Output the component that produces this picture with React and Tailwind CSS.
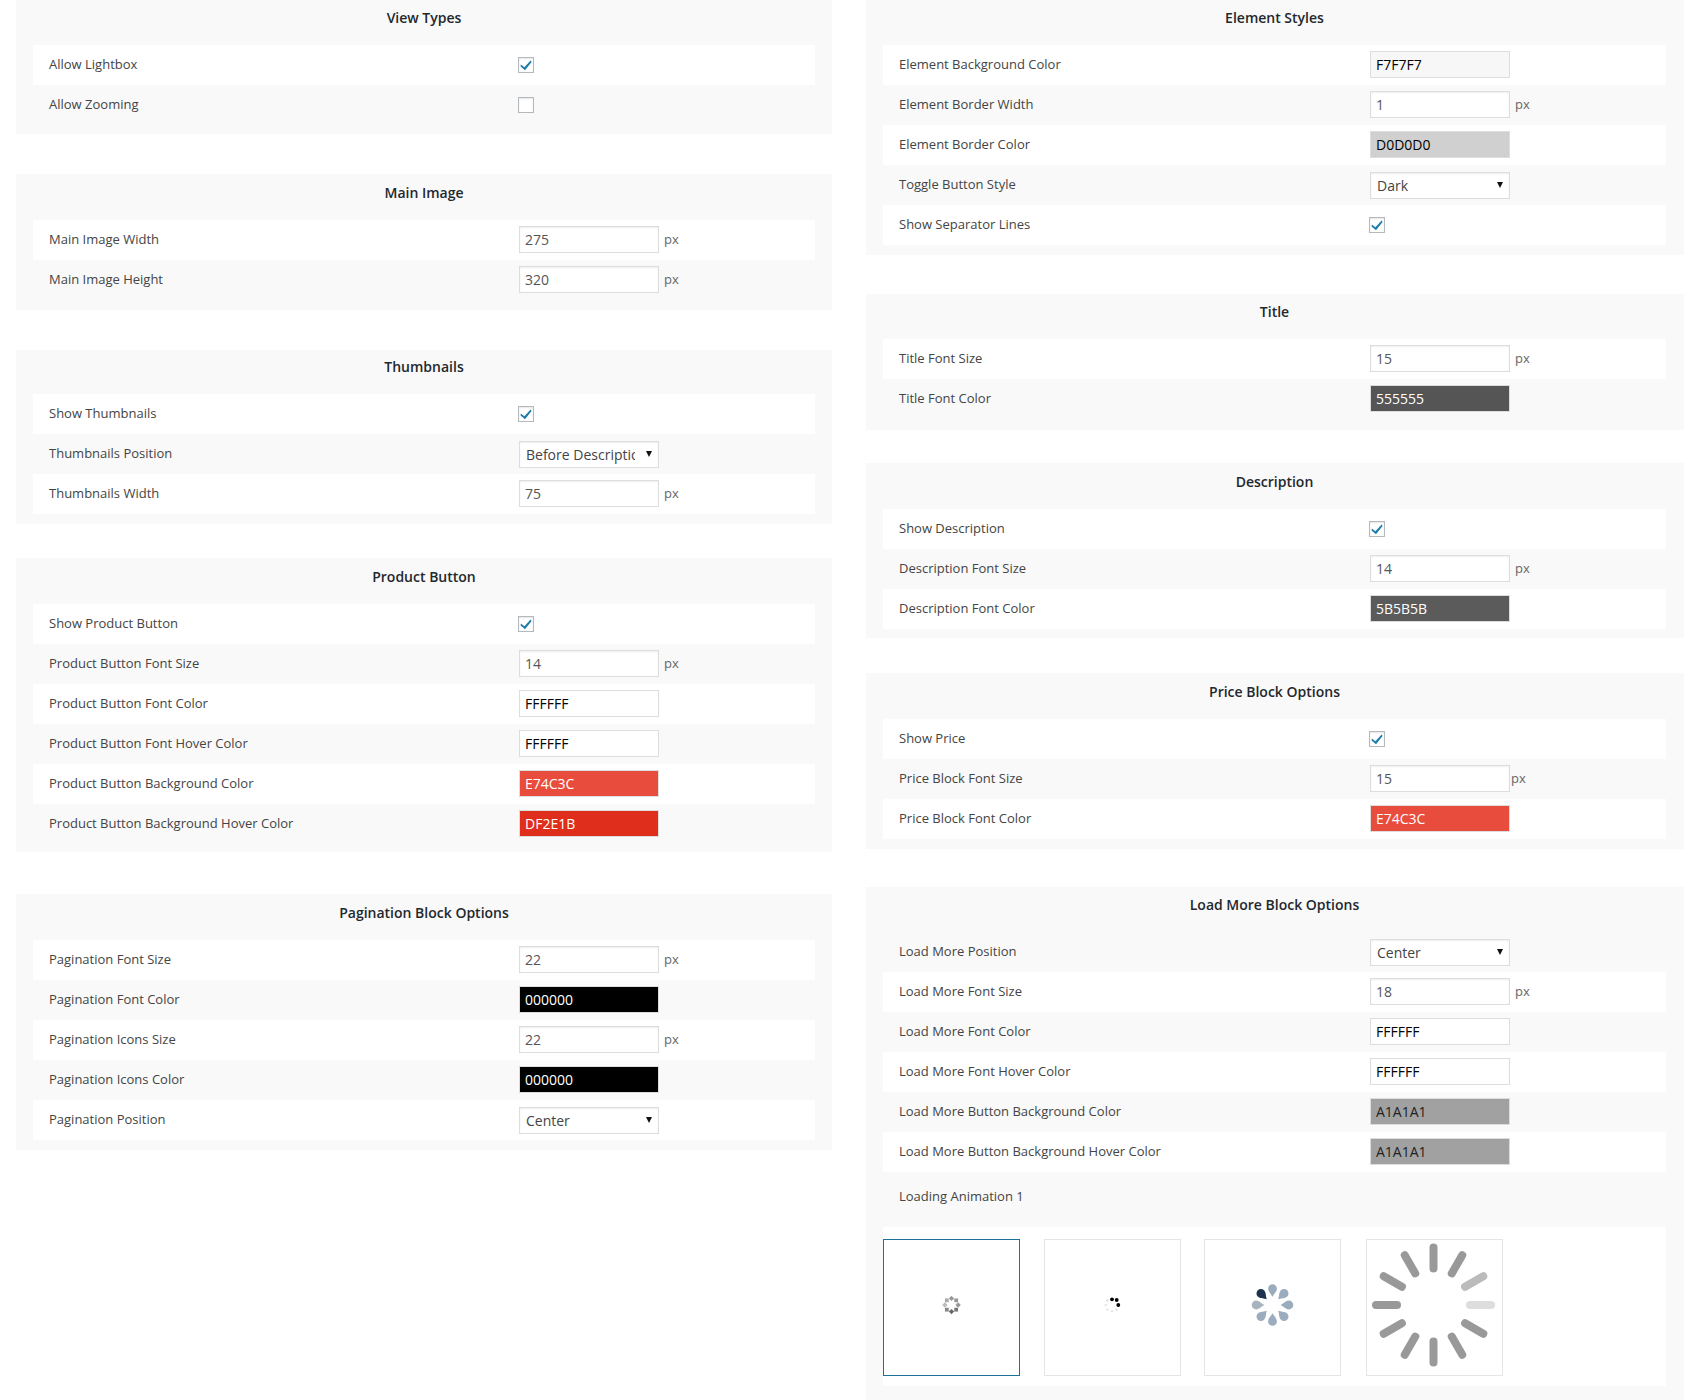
import React from 'react';

const leftPanels = [
  {
    title: 'View Types',
    titleClass: 'h-[45px] leading-[36px]',
    bodyClass: 'pb-[9px]',
    rows: [
      { label: 'Allow Lightbox', type: 'check', checked: true },
      { label: 'Allow Zooming', type: 'check' },
    ],
  },
  {
    title: 'Main Image',
    titleClass: 'h-[46px] leading-[38px]',
    bodyClass: 'mt-[40px] pb-[10px]',
    rows: [
      { label: 'Main Image Width', type: 'number', value: '275' },
      { label: 'Main Image Height', type: 'number', value: '320' },
    ],
  },
  {
    title: 'Thumbnails',
    titleClass: 'h-[44px] leading-[33px]',
    bodyClass: 'mt-[40px] pb-[10px]',
    rows: [
      { label: 'Show Thumbnails', type: 'check', checked: true },
      { label: 'Thumbnails Position', type: 'select', value: 'Before Description' },
      { label: 'Thumbnails Width', type: 'number', value: '75' },
    ],
  },
  {
    title: 'Product Button',
    titleClass: 'h-[46px] leading-[38px]',
    bodyClass: 'mt-[34px] pb-[8px]',
    rows: [
      { label: 'Show Product Button', type: 'check', checked: true },
      { label: 'Product Button Font Size', type: 'number', value: '14' },
      { label: 'Product Button Font Color', type: 'color', value: 'FFFFFF', swatch: 'bg-white text-black' },
      { label: 'Product Button Font Hover Color', type: 'color', value: 'FFFFFF', swatch: 'bg-white text-black' },
      { label: 'Product Button Background Color', type: 'color', value: 'E74C3C', swatch: 'bg-[#e74c3c] text-white' },
      { label: 'Product Button Background Hover Color', type: 'color', value: 'DF2E1B', swatch: 'bg-[#df2e1b] text-white' },
    ],
  },
  {
    title: 'Pagination Block Options',
    titleClass: 'h-[46px] leading-[38px]',
    bodyClass: 'mt-[42px] pb-[10px]',
    rows: [
      { label: 'Pagination Font Size', type: 'number', value: '22' },
      { label: 'Pagination Font Color', type: 'color', value: '000000', swatch: 'bg-black text-white' },
      { label: 'Pagination Icons Size', type: 'number', value: '22' },
      { label: 'Pagination Icons Color', type: 'color', value: '000000', swatch: 'bg-black text-white' },
      { label: 'Pagination Position', type: 'select', value: 'Center' },
    ],
  },
];

const rightPanels = [
  {
    title: 'Element Styles',
    titleClass: 'h-[45px] leading-[36px]',
    bodyClass: 'pb-[10px]',
    rows: [
      { label: 'Element Background Color', type: 'color', value: 'F7F7F7', swatch: 'bg-[#f7f7f7] text-black' },
      { label: 'Element Border Width', type: 'number', value: '1' },
      { label: 'Element Border Color', type: 'color', value: 'D0D0D0', swatch: 'bg-[#d0d0d0] text-black' },
      { label: 'Toggle Button Style', type: 'select', value: 'Dark' },
      { label: 'Show Separator Lines', type: 'check', checked: true },
    ],
  },
  {
    title: 'Title',
    titleClass: 'h-[45px] leading-[35px]',
    bodyClass: 'mt-[39px] pb-[11px]',
    rows: [
      { label: 'Title Font Size', type: 'number', value: '15' },
      { label: 'Title Font Color', type: 'color', value: '555555', swatch: 'bg-[#555555] text-white' },
    ],
  },
  {
    title: 'Description',
    titleClass: 'h-[46px] leading-[37px]',
    bodyClass: 'mt-[33px] pb-[9px]',
    rows: [
      { label: 'Show Description', type: 'check', checked: true },
      { label: 'Description Font Size', type: 'number', value: '14' },
      { label: 'Description Font Color', type: 'color', value: '5B5B5B', swatch: 'bg-[#5b5b5b] text-white' },
    ],
  },
  {
    title: 'Price Block Options',
    titleClass: 'h-[46px] leading-[38px]',
    bodyClass: 'mt-[35px] pb-[10px]',
    rows: [
      { label: 'Show Price', type: 'check', checked: true },
      { label: 'Price Block Font Size', type: 'number', value: '15', tightUnit: true },
      { label: 'Price Block Font Color', type: 'color', value: 'E74C3C', swatch: 'bg-[#e74c3c] text-white' },
    ],
  },
];

const loadMoreRows = [
  { label: 'Load More Position', type: 'select', value: 'Center' },
  { label: 'Load More Font Size', type: 'number', value: '18' },
  { label: 'Load More Font Color', type: 'color', value: 'FFFFFF', swatch: 'bg-white text-black' },
  { label: 'Load More Font Hover Color', type: 'color', value: 'FFFFFF', swatch: 'bg-white text-black' },
  { label: 'Load More Button Background Color', type: 'color', value: 'A1A1A1', swatch: 'bg-[#a1a1a1] text-[#222]' },
  { label: 'Load More Button Background Hover Color', type: 'color', value: 'A1A1A1', swatch: 'bg-[#a1a1a1] text-[#222]' },
];

function Checkbox({ checked }) {
  return (
    <span className="-ml-px flex h-4 w-4 items-center justify-center border border-[#b4b9be] bg-white shadow-[inset_0_1px_2px_rgba(0,0,0,0.1)]">
      {checked && (
        <svg width="14" height="14" viewBox="0 0 14 14">
          <path d="M1.8 6.6 L5.4 9.2 L11.6 2.4 L12.6 4 L6 12.2 L1.6 8.4 Z" fill="#1e7cab" />
        </svg>
      )}
    </span>
  );
}

function Field({ row }) {
  if (row.type === 'check') return <Checkbox checked={row.checked} />;

  if (row.type === 'select') {
    return (
      <span className="relative block h-[27px] w-[140px]">
        <select
          defaultValue={row.value}
          className="h-[27px] w-[140px] appearance-none border border-[#ddd] bg-white pr-[23px] pl-[6px] text-[14px] text-[#444] shadow-[inset_0_1px_2px_rgba(0,0,0,0.07)]"
        >
          <option>{row.value}</option>
        </select>
        <svg className="absolute top-[10px] right-[7px]" width="6" height="6" viewBox="0 0 6 6">
          <path d="M0 0 H6 L3 6 Z" fill="#111" />
        </svg>
      </span>
    );
  }

  if (row.type === 'color') {
    return (
      <input
        readOnly
        value={row.value}
        className={`mb-0.5 h-[27px] w-[140px] border border-[#ddd] px-[5px] text-[14px] ${row.swatch}`}
      />
    );
  }

  return (
    <span className="flex items-center">
      <input
        readOnly
        value={row.value}
        className="mb-0.5 h-[27px] w-[140px] border border-[#ddd] bg-white px-[5px] text-[14px] text-[#555] shadow-[inset_0_1px_2px_rgba(0,0,0,0.07)]"
      />
      <span className={row.tightUnit ? 'ml-px text-[13px] text-[#666]' : 'ml-[5px] text-[13px] text-[#666]'}>px</span>
    </span>
  );
}

function Row({ row, white, wide }) {
  return (
    <div className={white ? 'flex h-10 items-center bg-white' : 'flex h-10 items-center'}>
      <div className={wide ? 'w-[487px] pl-4 text-[13px] text-[#444]' : 'w-[486px] pl-4 text-[13px] text-[#444]'}>
        {row.label}
      </div>
      <Field row={row} />
    </div>
  );
}

function Panel({ panel, sideClass, wide }) {
  return (
    <section className={`bg-[#f9f9f9] ${sideClass} ${panel.bodyClass}`}>
      <h2 className={`text-center text-[14px] font-semibold text-[#23282d] ${panel.titleClass}`}>{panel.title}</h2>
      {panel.rows.map((row, i) => (
        <Row key={row.label} row={row} white={i % 2 === 0} wide={wide} />
      ))}
    </section>
  );
}

function DotSpinner() {
  const fills = ['#999', '#999', '#999', '#777', '#666', '#888', '#bbb', '#aaa'];
  return (
    <svg width="135" height="135" viewBox="0 0 135 135">
      {fills.map((fill, i) => (
        <rect
          key={i}
          x="-1.9"
          y="-8.5"
          width="3.8"
          height="3.8"
          fill={fill}
          transform={`translate(67.5 65) rotate(${i * 45}) rotate(45 0 -6.6)`}
        />
      ))}
    </svg>
  );
}

function FadeSpinner() {
  const dots = [
    [0, -5.7, '#000'],
    [4.7, -5, '#000'],
    [6.3, 0, '#000'],
    [4.6, 4.6, '#ddd'],
    [0, 6.3, '#e4e4e4'],
    [-4.6, 4.6, '#e4e4e4'],
    [-6.3, 0, '#e4e4e4'],
    [-4.6, -4.6, '#ddd'],
  ];
  return (
    <svg width="135" height="135" viewBox="0 0 135 135">
      {dots.map(([x, y, fill], i) => (
        <circle key={i} cx={67 + x} cy={65 + y} r={fill === '#000' ? 1.9 : 1.2} fill={fill} />
      ))}
    </svg>
  );
}

function DropSpinner() {
  const fills = ['#9aacbd', '#9aacbd', '#9aacbd', '#9aacbd', '#9aacbd', '#9aacbd', '#a9b3bd', '#1c3450'];
  return (
    <svg width="135" height="135" viewBox="0 0 135 135">
      {fills.map((fill, i) => (
        <path
          key={i}
          d="M0 -8 C-0.8 -10.5 -4.4 -13 -4.4 -16.4 A4.4 4.4 0 1 1 4.4 -16.4 C4.4 -13 0.8 -10.5 0 -8 Z"
          fill={fill}
          transform={`translate(67.5 65) rotate(${i * 45})`}
        />
      ))}
    </svg>
  );
}

function BarSpinner() {
  const bars = Array.from({ length: 12 }, (_, i) => i);
  return (
    <svg width="135" height="135" viewBox="0 0 135 135">
      {bars.map((i) => {
        let stroke = '#999';
        if (i === 3) stroke = '#ddd';
        if (i === 2) stroke = '#bbb';
        return (
          <line
            key={i}
            x1="0"
            y1="-36.5"
            x2="0"
            y2="-57.5"
            stroke={stroke}
            strokeWidth="8"
            strokeLinecap="round"
            transform={`translate(66.5 65) rotate(${i * 30})`}
          />
        );
      })}
    </svg>
  );
}

function LoadMorePanel() {
  return (
    <section className="mt-[38px] h-[600px] bg-[#f9f9f9] pr-[18px] pl-[17px]">
      <h2 className="h-[45px] text-center text-[14px] leading-[36px] font-semibold text-[#23282d]">
        Load More Block Options
      </h2>
      {loadMoreRows.map((row, i) => (
        <Row key={row.label} row={row} white={i % 2 === 1} wide />
      ))}
      <div className="h-[55px] pt-[14px] pl-4 text-[13px] leading-[20px] text-[#444]">Loading Animation 1</div>
      <div className="flex h-[159px] bg-white pt-3">
        <div className="h-[137px] w-[137px] border border-[#1e6f9c]">
          <DotSpinner />
        </div>
        <div className="ml-6 h-[137px] w-[137px] border border-[#e5e5e5]">
          <FadeSpinner />
        </div>
        <div className="ml-[23px] h-[137px] w-[137px] border border-[#e5e5e5]">
          <DropSpinner />
        </div>
        <div className="ml-[25px] h-[137px] w-[137px] border border-[#e5e5e5]">
          <BarSpinner />
        </div>
      </div>
    </section>
  );
}

export default function App() {
  return (
    <div className="h-[1400px] overflow-hidden bg-white pl-4 font-['Open_Sans',sans-serif]">
      <div className="grid grid-cols-[816px_818px] items-start gap-x-[34px]">
        <div>
          {leftPanels.map((panel) => (
            <Panel key={panel.title} panel={panel} sideClass="px-[17px]" />
          ))}
        </div>
        <div>
          {rightPanels.map((panel) => (
            <Panel key={panel.title} panel={panel} sideClass="pr-[18px] pl-[17px]" wide />
          ))}
          <LoadMorePanel />
        </div>
      </div>
    </div>
  );
}
